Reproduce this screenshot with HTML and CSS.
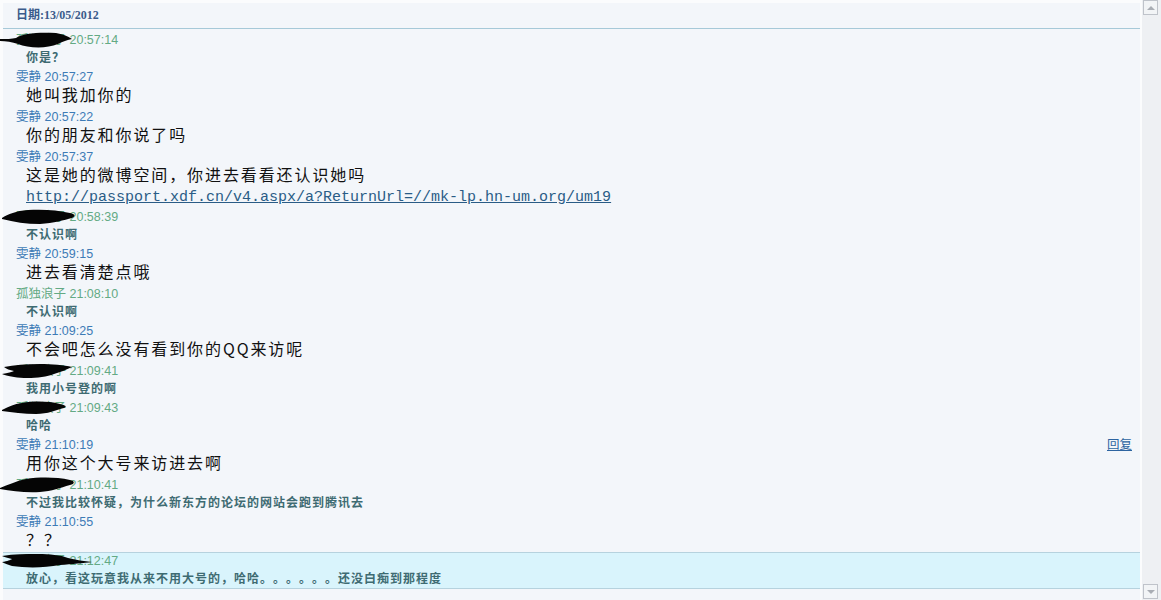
FILE: index.html
```html
<!DOCTYPE html>
<html lang="zh-CN">

<head>
    <meta charset="UTF-8" />
    <title>消息记录</title>
    <link rel="stylesheet" href="styles.css">
</head>

<body>
    <div class="page">
        <div class="log">
            <div class="date">日期:13/05/2012</div>
            <ul class="list">
                <li class="msg">
                    <div class="head other">
                        <svg class="blot" viewBox="0 0 80 20"><path d="M0 9 C6 9 12 9 16 8 C22 3 40 2 56 3 C62 4 68 6 72 9 C66 10 62 12 58 14 C46 19 28 18 18 14 C12 12 6 11 0 11 Z" /></svg>
                        孤独浪子 20:57:14
                    </div>
                    <div class="body bold"><div class="line">你是？</div></div>
                </li>
                <li class="msg">
                    <div class="head">雯静 20:57:27</div>
                    <div class="body"><div class="line">她叫我加你的</div></div>
                </li>
                <li class="msg">
                    <div class="head">雯静 20:57:22</div>
                    <div class="body"><div class="line">你的朋友和你说了吗</div></div>
                </li>
                <li class="msg">
                    <div class="head">雯静 20:57:37</div>
                    <div class="body">
                        <div class="line">这是她的微博空间，你进去看看还认识她吗</div>
                        <div class="line"><a class="url" href="#">http://passport.xdf.cn/v4.aspx/a?ReturnUrl=//mk-lp.hn-um.org/um19</a></div>
                    </div>
                </li>
                <li class="msg">
                    <div class="head other">
                        <svg class="blot" viewBox="0 0 80 20"><path d="M2 11 C8 7 16 4 28 3 C42 2 58 3 70 6 C75 7 76 9 72 11 C64 13 54 16 40 17 C26 17 14 15 2 12 Z" /></svg>
                        孤独浪子 20:58:39
                    </div>
                    <div class="body bold"><div class="line">不认识啊</div></div>
                </li>
                <li class="msg">
                    <div class="head">雯静 20:59:15</div>
                    <div class="body"><div class="line">进去看清楚点哦</div></div>
                </li>
                <li class="msg">
                    <div class="head other">孤独浪子 21:08:10</div>
                    <div class="body bold"><div class="line">不认识啊</div></div>
                </li>
                <li class="msg">
                    <div class="head">雯静 21:09:25</div>
                    <div class="body"><div class="line">不会吧怎么没有看到你的QQ来访呢</div></div>
                </li>
                <li class="msg">
                    <div class="head other">
                        <svg class="blot" viewBox="0 0 80 20"><path d="M4 6 C14 4 26 3 40 3 C52 3 64 4 72 6 C66 9 60 11 54 13 C44 17 26 18 14 16 C8 15 4 14 2 13 C8 12 12 11 14 10 C10 9 6 8 4 6 Z" /></svg>
                        孤独浪子 21:09:41
                    </div>
                    <div class="body bold"><div class="line">我用小号登的啊</div></div>
                </li>
                <li class="msg">
                    <div class="head other">
                        <svg class="blot" viewBox="0 0 80 20"><path d="M2 12 C8 9 14 6 22 5 C34 3 48 3 60 6 C64 7 68 8 64 10 C56 12 48 16 36 16 C24 16 12 14 2 13 Z" /></svg>
                        孤独浪子 21:09:43
                    </div>
                    <div class="body bold"><div class="line">哈哈</div></div>
                </li>
                <li class="msg">
                    <div class="head">雯静 21:10:19<a class="reply" href="#">回复</a></div>
                    <div class="body"><div class="line">用你这个大号来访进去啊</div></div>
                </li>
                <li class="msg">
                    <div class="head other">
                        <svg class="blot" viewBox="0 0 80 20"><path d="M0 13 C8 10 16 6 26 4 C40 2 56 2 70 5 C75 6 75 9 70 10 C60 13 52 16 40 17 C26 18 12 16 0 14 Z" /></svg>
                        孤独浪子 21:10:41
                    </div>
                    <div class="body bold"><div class="line">不过我比较怀疑，为什么新东方的论坛的网站会跑到腾讯去</div></div>
                </li>
                <li class="msg">
                    <div class="head">雯静 21:10:55</div>
                    <div class="body"><div class="line">？？</div></div>
                </li>
                <li class="msg current">
                    <div class="head other">
                        <svg class="blot long" viewBox="0 0 100 20"><path d="M2 5 C14 3 26 3 38 3 C50 3 60 4 68 7 C76 9 84 10 92 11 C84 12 72 13 60 14 C44 17 26 17 12 15 C8 14 4 12 2 11 C8 10 10 9 12 8 C8 7 4 6 2 5 Z" /></svg>
                        孤独浪子 21:12:47
                    </div>
                    <div class="body bold"><div class="line">放心，看这玩意我从来不用大号的，哈哈。。。。。。还没白痴到那程度</div></div>
                </li>
            </ul>
        </div>
        <div class="scrollbar">
            <span class="arrow up"></span>
            <span class="arrow down"></span>
        </div>
    </div>
</body>

</html>
```

FILE: styles.css
```css
* {
    margin: 0;
    padding: 0;
    box-sizing: border-box;
}

body {
    background: #fbfcfd;
    font-family: "Liberation Sans", "Noto Sans CJK SC", sans-serif;
    text-spacing-trim: space-all;
    overflow: hidden;
}

.page {
    display: flex;
    height: 100vh;
}

.log {
    flex: 1;
    margin: 3px 2px 0 3px;
    background: #f3f6fa;
}

.date {
    height: 26px;
    line-height: 25px;
    padding-left: 13px;
    border-bottom: 1px solid #a6c9d8;
    font-family: "Liberation Serif", "Noto Sans CJK SC", serif;
    font-size: 12px;
    font-weight: bold;
    color: #3b5b8b;
}

.list {
    padding-top: 3px;
}

.msg {
    list-style: none;
}

.head {
    position: relative;
    height: 17px;
    line-height: 17px;
    padding-left: 13px;
    font-size: 12.5px;
    color: #3d7bb6;
    white-space: nowrap;
}

.head.other {
    color: #63aa84;
}

.blot {
    position: absolute;
    left: -3px;
    top: -2px;
    width: 80px;
    height: 20px;
    fill: #050505;
}

.blot.long {
    width: 100px;
}

.reply {
    position: absolute;
    right: 8px;
    top: 0;
    color: #2d64a0;
}

.body {
    padding: 0 0 3px 23px;
    font-family: "Noto Sans CJK SC", sans-serif;
    font-size: 16px;
    letter-spacing: 1.9px;
    color: #111;
}

.line {
    height: 20px;
    line-height: 16px;
    white-space: nowrap;
}

.body.bold {
    font-size: 12px;
    letter-spacing: 1px;
    font-weight: bold;
    color: #3e6b72;
}

.body.bold .line {
    height: 17px;
    line-height: 15px;
}

.url {
    font-family: "Liberation Mono", monospace;
    font-size: 15px;
    letter-spacing: 0;
    color: #2a5c86;
}

.current {
    margin-top: -2px;
    background: #d9f4fc;
    border-top: 1px solid #b6d2de;
    border-bottom: 1px solid #b6d2de;
}

.current .body.bold {
    padding-bottom: 1px;
}

.scrollbar {
    width: 19px;
    background: #eef0f3;
    display: flex;
    flex-direction: column;
    justify-content: space-between;
    padding: 0 3px 1px 1px;
}

.arrow {
    display: flex;
    align-items: center;
    justify-content: center;
    height: 15px;
    border: 1px solid #bfc3ca;
    background: #f2f4f6;
}

.arrow::after {
    content: "";
    border-left: 4px solid transparent;
    border-right: 4px solid transparent;
}

.arrow.up::after {
    border-bottom: 4px solid #a9adb4;
}

.arrow.down::after {
    border-top: 4px solid #a9adb4;
}
```
